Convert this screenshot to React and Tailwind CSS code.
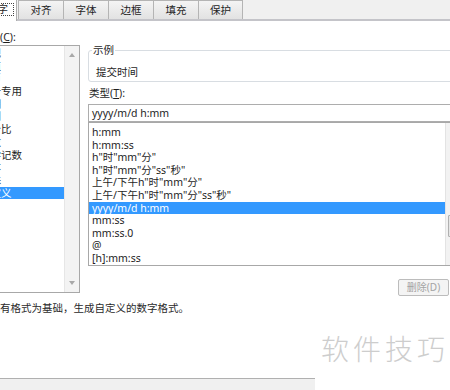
export default function App() {
  const tabs = ["对齐", "字体", "边框", "填充", "保护"];
  const cats = ["常规", "数值", "货币", "会计专用", "日期", "时间", "百分比", "分数", "科学记数", "文本", "特殊", "自定义"];
  const types = [
    "h:mm",
    "h:mm:ss",
    'h"时"mm"分"',
    'h"时"mm"分"ss"秒"',
    '上午/下午h"时"mm"分"',
    '上午/下午h"时"mm"分"ss"秒"',
    "yyyy/m/d h:mm",
    "mm:ss",
    "mm:ss.0",
    "@",
    "[h]:mm:ss",
  ];
  return (
    <div className="relative w-[450px] h-[390px] overflow-hidden bg-white flex flex-col text-[10.5px] text-[#1e1e1e] font-['Noto_Sans','Noto_Sans_CJK_SC',sans-serif]">
      {/* tab bar */}
      <div className="flex h-[21px] shrink-0 bg-[#f0f0f0] border-b-2 border-[#c4c4c9] items-start">
        <div className="ml-[-24px] w-[41px] h-[21px] -mb-[2px] bg-white border-r border-[#adadad] flex items-start justify-end pr-[2px] pt-[3px]">
          <span className="h-[13px] border border-dotted border-[#444] px-[5px] leading-[11px]">数字</span>
        </div>
        {tabs.map((t, i) => (
          <div
            key={t}
            className={`w-[45px] h-[19px] border-t border-[#b4b4b4] bg-gradient-to-b from-[#f4f4f4] to-[#e2e2e2] flex items-center justify-center leading-[14px] ${i === 0 ? "ml-[1px] border-l" : "border-l"} ${i === tabs.length - 1 ? "border-r" : ""}`}
          >
            {t}
          </div>
        ))}
      </div>

      {/* body */}
      <div className="flex h-[272px] shrink-0 items-start">
        {/* left column */}
        <div className="ml-[-24px] w-[104px] shrink-0 flex flex-col">
          <div className="mt-[9px] leading-[14px] pl-[3px]">
            分类(<span className="underline">C</span>):
          </div>
          <div className="mt-[1px] h-[248px] border border-[#a8a8a8] flex">
            <div className="flex-1 flex flex-col pt-[1px]">
              {cats.map((c) => (
                <div
                  key={c}
                  className={`h-[12.7px] leading-[12.7px] pl-[3px] whitespace-nowrap ${c === "自定义" ? "bg-[#3399ff] text-white" : ""}`}
                >
                  {c}
                </div>
              ))}
            </div>
            <div className="w-[15px] bg-[#f3f3f3] border-l border-[#e6e6e6] flex flex-col justify-between items-center py-[7px]">
              <svg width="6" height="4" viewBox="0 0 6 4"><path d="M0 4 L3 0 L6 4 Z" fill="#a8a8a8" /></svg>
              <svg width="6" height="4" viewBox="0 0 6 4"><path d="M0 0 L3 4 L6 0 Z" fill="#a8a8a8" /></svg>
            </div>
          </div>
        </div>

        {/* right column */}
        <div className="ml-[8px] w-[376px] shrink-0 flex flex-col">
          <fieldset className="mt-[22px] h-[39px] border border-[#d8dde2] rounded-[3px] pl-[3px]">
            <legend className="px-[1px] leading-[14px]">示例</legend>
            <div className="mt-[8px] pl-[4px] leading-[14px]">提交时间</div>
          </fieldset>
          <div className="mt-[4px] leading-[14px] pl-[1px]">
            类型(<span className="underline">T</span>):
          </div>
          <div className="mt-[4px] h-[18px] border border-[#adadad] pl-[3px] leading-[16px]">yyyy/m/d h:mm</div>
          <div className="h-[144px] border border-[#a8a8a8] flex">
            <div className="flex-1 flex flex-col pt-[3px]">
              {types.map((t) => (
                <div
                  key={t}
                  className={`h-[12.6px] leading-[12.6px] pl-[3px] whitespace-nowrap ${t === "yyyy/m/d h:mm" ? "bg-[#3399ff] text-white" : ""}`}
                >
                  {t}
                </div>
              ))}
            </div>
            <div className="w-[18px] bg-[#f2f2f2] border-l border-[#e3e3e3] flex flex-col">
              <div className="mt-[92px] mx-[2px] h-[22px] border border-[#b0b0b0] bg-[#e6e6e6] rounded-[1px]" />
            </div>
          </div>
          <div className="mt-[13px] flex justify-end pr-[15px]">
            <div className="w-[51px] h-[17px] border border-[#bcbcbc] rounded-[2px] bg-[#f4f4f4] text-[#a3a3a3] text-[10px] leading-[15px] flex items-center justify-center">
              删除(D)
            </div>
          </div>
        </div>
      </div>

      {/* description */}
      <div className="mt-[8px] ml-[-21px] leading-[14px] text-[#2a2a2a] whitespace-nowrap">
        以现有格式为基础，生成自定义的数字格式。
      </div>

      <div className="flex-1" />

      {/* bottom bar */}
      <div className="h-[12px] shrink-0 border-t border-[#b0b0b0] bg-[#f0f0f0]" />

      {/* watermark */}
      <div className="absolute right-0 bottom-0 w-[135px] h-[60px] bg-white flex items-start pl-[6px] pt-[2px]">
        <span className="text-[28px] leading-[32px] tracking-[4px] text-[#cdcdcd] font-light font-['Noto_Sans_CJK_SC',sans-serif]">软件技巧</span>
      </div>
    </div>
  );
}
